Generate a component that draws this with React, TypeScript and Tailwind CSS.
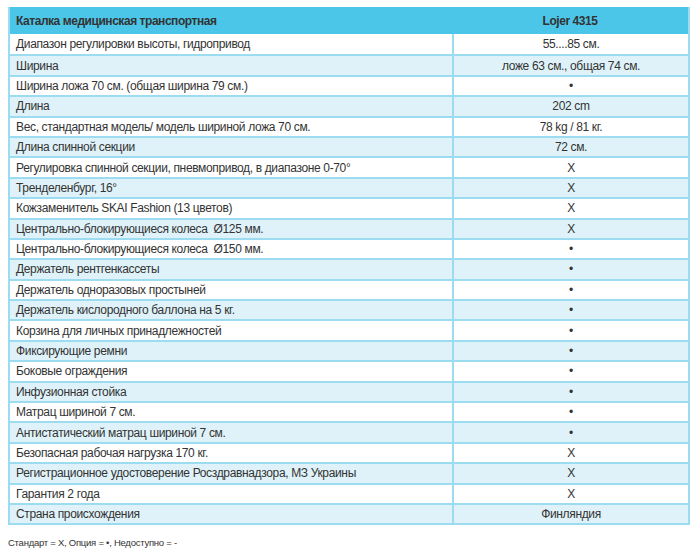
const rows: [string, string][] = [
  ["Диапазон регулировки высоты, гидропривод", "55....85 см."],
  ["Ширина", "ложе 63 см., общая 74 см."],
  ["Ширина ложа 70 см. (общая ширина 79 см.)", "•"],
  ["Длина", "202 cm"],
  ["Вес, стандартная модель/ модель шириной ложа 70 см.", "78 kg / 81 кг."],
  ["Длина спинной секции", "72 см."],
  ["Регулировка спинной секции, пневмопривод, в диапазоне 0-70°", "X"],
  ["Тренделенбург, 16°", "X"],
  ["Кожзаменитель SKAI Fashion (13 цветов)", "X"],
  ["Центрально-блокирующиеся колеса  Ø125 мм.", "X"],
  ["Центрально-блокирующиеся колеса  Ø150 мм.", "•"],
  ["Держатель рентгенкассеты", "•"],
  ["Держатель одноразовых простыней", "•"],
  ["Держатель кислородного баллона на 5 кг.", "•"],
  ["Корзина для личных принадлежностей", "•"],
  ["Фиксирующие ремни", "•"],
  ["Боковые ограждения", "•"],
  ["Инфузионная стойка", "•"],
  ["Матрац шириной 7 см.", "•"],
  ["Антистатический матрац шириной 7 см.", "•"],
  ["Безопасная рабочая нагрузка 170 кг.", "X"],
  ["Регистрационное удостоверение Росздравнадзора, МЗ Украины", "X"],
  ["Гарантия 2 года", "X"],
  ["Страна происхождения", "Финляндия"],
];

export default function App() {
  return (
    <div
      className="w-[700px] h-[560px] bg-white text-[#333] pt-[7px] pl-[8px]"
      style={{ fontFamily: '"Liberation Sans Narrow", "Liberation Sans", Arial, sans-serif' }}
    >
      <div className="w-[682px] border-x-2 border-b-2 border-[#9bdcf1]">
        <div className="flex h-[27px] items-center bg-[#4bc6e9] font-bold text-[12px] tracking-[-0.45px]">
          <div className="w-[442px] pl-[6px]">Каталка медицинская транспортная</div>
          <div className="flex-1 text-center">Lojer 4315</div>
        </div>
        {rows.map(([label, value], i) => (
          <div
            key={i}
            className={`flex h-[20.4px] text-[12px] tracking-[-0.35px] leading-none ${
              i % 2 === 1 ? "bg-[#dff2f9]" : "bg-white"
            } ${i > 0 ? "border-t-2 border-[#9bdcf1]" : ""}`}
          >
            <div className="w-[442px] flex items-center pl-[6px] whitespace-pre">{label}</div>
            <div className="flex-1 flex items-center justify-center border-l-2 border-[#9bdcf1]">
              {value}
            </div>
          </div>
        ))}
      </div>
      <div className="mt-[11px] text-[9.5px] tracking-[-0.25px]">Стандарт = X, Опция = •, Недоступно = -</div>
    </div>
  );
}
